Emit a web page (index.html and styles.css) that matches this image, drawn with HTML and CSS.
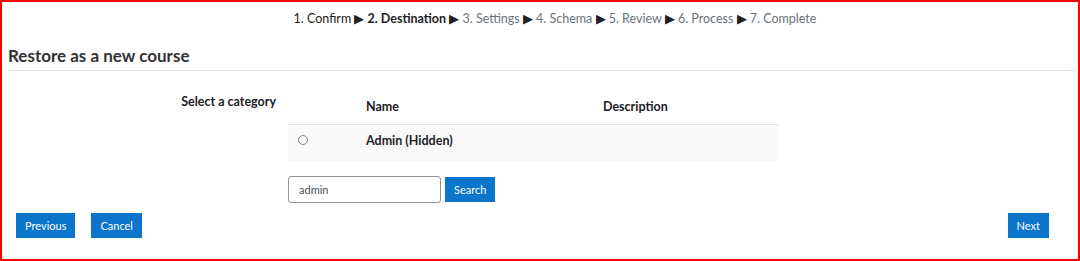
FILE: index.html
```html
<!DOCTYPE html>
<html>
<head>
<meta charset="utf-8">
<link rel="stylesheet" href="styles.css">
</head>
<body>
<div class="frame">
  <div class="steps">
    <span class="done">1. Confirm</span> <span class="arrow">&#9654;</span>
    <span class="current">2. Destination</span> <span class="arrow">&#9654;</span>
    <span class="todo">3. Settings</span> <span class="arrow">&#9654;</span>
    <span class="todo">4. Schema</span> <span class="arrow">&#9654;</span>
    <span class="todo">5. Review</span> <span class="arrow">&#9654;</span>
    <span class="todo">6. Process</span> <span class="arrow">&#9654;</span>
    <span class="todo">7. Complete</span>
  </div>
  <h2 class="title">Restore as a new course</h2>
  <div class="form-row">
    <div class="label">Select a category</div>
    <div class="field">
      <table class="cats">
        <thead>
          <tr><th class="c-radio"></th><th class="c-name">Name</th><th class="c-desc">Description</th></tr>
        </thead>
        <tbody>
          <tr><td class="c-radio"><span class="radio"></span></td><td class="c-name">Admin (Hidden)</td><td class="c-desc"></td></tr>
        </tbody>
      </table>
      <div class="search">
        <input class="search-input" type="text" value="admin">
        <button class="btn">Search</button>
      </div>
    </div>
  </div>
  <div class="actions">
    <div class="left">
      <button class="btn">Previous</button>
      <button class="btn">Cancel</button>
    </div>
    <button class="btn">Next</button>
  </div>
</div>
</body>
</html>
```
FILE: styles.css
```css
html, body { margin: 0; padding: 0; background: #fff; }
body { font-family: "Lato", "Open Sans", sans-serif; color: #1d2125; }
.frame {
  width: 1080px; height: 261px; box-sizing: border-box;
  border: 2px solid #ff0000;
  padding: 0 2px 0 6px;
}
.steps {
  text-align: center; font-size: 12.5px; line-height: 18px; height: 18px;
  padding-top: 8px; padding-left: 26px;
}
.steps .done { color: #1d2125; }
.steps .current { font-weight: bold; color: #1d2125; }
.steps .todo { color: #6a737b; }
.steps .arrow { font-size: 13px; line-height: 0; color: #1d2125; }
.title {
  margin: 17px 0 0; font-size: 17px; font-weight: bold; color: #333;
  line-height: 21px; padding-bottom: 4px;
  border-bottom: 1px solid #e3e3e3;
}
.form-row { display: flex; margin-top: 18px; }
.label { width: 280px; text-align: right; font-size: 12.5px; font-weight: bold; padding-right: 12px; box-sizing: border-box; padding-top: 5px; }
.field { width: 490px; }
.cats { width: 490px; border-collapse: collapse; font-size: 12.5px; }
.cats th { font-weight: bold; text-align: left; padding: 10px 10px 10px; height: 14px; border-bottom: 1px solid #dee2e6; }
.cats td { font-weight: bold; background: #f9f9f9; padding: 8px 10px 13px; vertical-align: top; }
.c-radio { width: 48px; }
.c-name { width: 217px; }
.radio { display: inline-block; width: 8px; height: 8px; border: 1px solid #8a8a8a; border-radius: 50%; margin-top: 0; }
.search { display: flex; align-items: center; gap: 4px; margin-top: 15px; }
.search-input {
  width: 153px; height: 27px; box-sizing: border-box; border: 1px solid #8f959e; border-radius: 3px;
  padding: 0 10px; font-family: inherit; font-size: 11px; color: #495057;
}
.btn {
  background: #0a75cb; color: #fff; border: 0; font-family: inherit; font-size: 11px;
  height: 25px; padding: 0 9px; border-radius: 0;
}
.actions { display: flex; justify-content: space-between; align-items: center; padding: 10px 27px 0 8px; }
.actions .left { display: flex; gap: 16px; }
```
